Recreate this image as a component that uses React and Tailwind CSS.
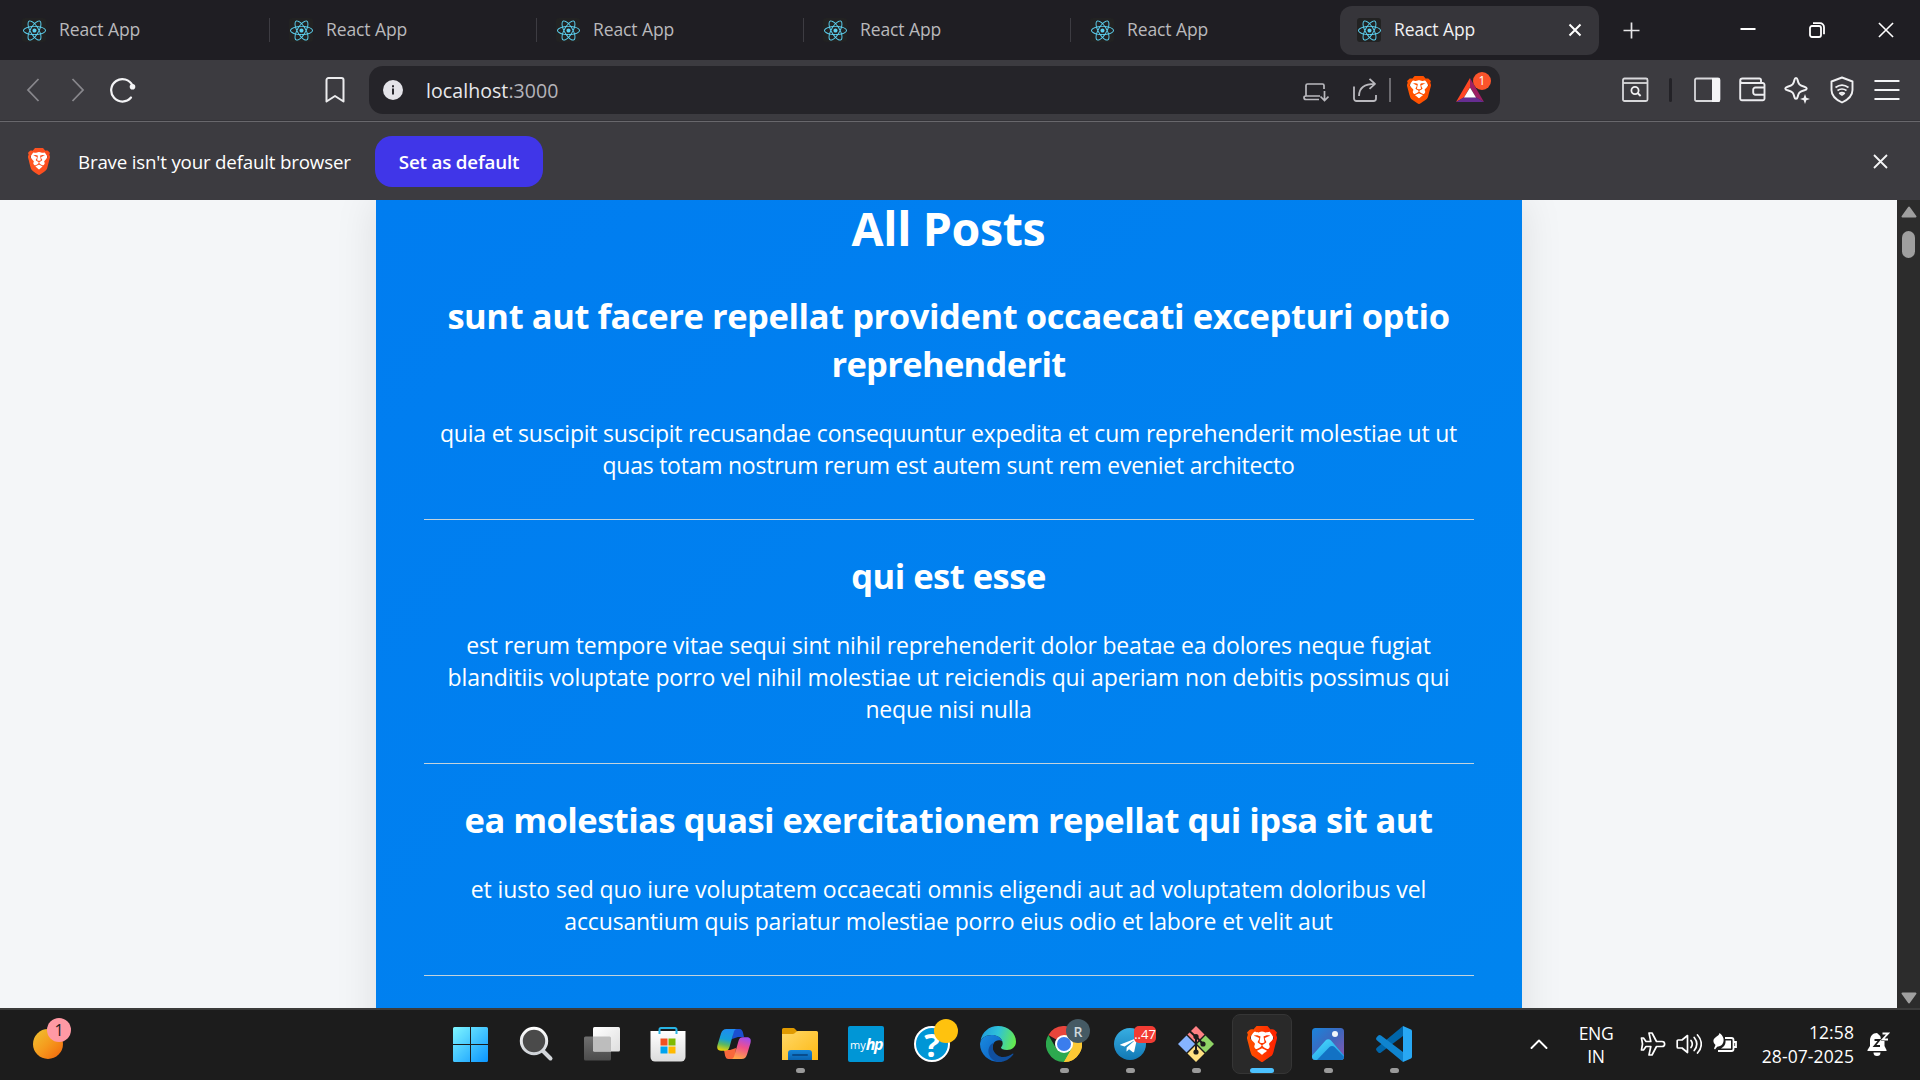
import React from "react";
import { SiBrave } from "react-icons/si";
import { FaReact, FaTelegramPlane } from "react-icons/fa";

const posts = [
  {
    title: [
      ["sunt aut facere repellat provident occaecati excepturi optio", "tracking-[-0.42px]"],
      ["reprehenderit", "tracking-[-0.68px]"],
    ],
    body: [
      ["quia et suscipit suscipit recusandae consequuntur expedita et cum reprehenderit molestiae ut ut", "tracking-[-0.21px]"],
      ["quas totam nostrum rerum est autem sunt rem eveniet architecto", "tracking-[-0.24px]"],
    ],
  },
  {
    title: [["qui est esse", "tracking-[-0.5px]"]],
    body: [
      ["est rerum tempore vitae sequi sint nihil reprehenderit dolor beatae ea dolores neque fugiat", "tracking-[-0.17px]"],
      ["blanditiis voluptate porro vel nihil molestiae ut reiciendis qui aperiam non debitis possimus qui", "tracking-[-0.14px]"],
      ["neque nisi nulla", "tracking-[-0.2px]"],
    ],
  },
  {
    title: [["ea molestias quasi exercitationem repellat qui ipsa sit aut", "tracking-[-0.52px]"]],
    body: [
      ["et iusto sed quo iure voluptatem occaecati omnis eligendi aut ad voluptatem doloribus vel", "tracking-[-0.08px]"],
      ["accusantium quis pariatur molestiae porro eius odio et labore et velit aut", "tracking-[-0.16px]"],
    ],
  },
];

function BraveLogo({ className, id, from = "#ff5722", to = "#fb4a1e" }) {
  return (
    <svg className={className} viewBox="1.9 0 20.2 24" preserveAspectRatio="none">
      <defs>
        <linearGradient id={id} x1="0" x2="1">
          <stop offset="0" stopColor={from} />
          <stop offset="1" stopColor={to} />
        </linearGradient>
      </defs>
      <path d="M5 4L8 2.5h8L19 4l.500 4-2 8-5.500 5-5.500-5-2-8z" fill="#fff" />
      <SiBrave size={24} style={{ fill: "url(#" + id + ")" }} />
    </svg>
  );
}

function Favicon() {
  return (
    <span className="flex h-6 w-6 shrink-0 items-center justify-center rounded-[3px] bg-[#222222]">
      <FaReact className="h-[23px] w-[23px] text-[#5ccfee]" />
    </span>
  );
}

function TabBar() {
  return (
    <div className="flex h-[60px] items-center bg-[#1f1e23] text-[17.5px] leading-6 tracking-[-0.1px]">
      {[0, 1, 2, 3, 4].map((i) => (
        <div key={i} className={"flex h-6 shrink-0 items-center text-[#b9b9bc] " + (i === 0 ? "w-[270px] border-r border-[#3d3c42] pl-[22px]" : i === 4 ? "w-[267px] pl-[19px]" : "w-[267px] border-r border-[#3d3c42] pl-[19px]")}>
          <Favicon />
          <span className="ml-[13px] pb-[2px]">React App</span>
        </div>
      ))}
      <div className="ml-[2px] flex h-[49px] w-[259px] shrink-0 items-center rounded-xl bg-[#36353a] pl-[17px] text-[#f0f0f2]">
        <Favicon />
        <span className="ml-[13px] grow pb-[2px]">React App</span>
        <svg className="mr-[17px] h-[14px] w-[14px]" viewBox="0 0 14 14" fill="none" stroke="#fff" strokeWidth="2"><path d="M1.5 1.5l11 11M12.5 1.5l-11 11" /></svg>
      </div>
      <svg className="ml-[24px] h-[17px] w-[17px]" viewBox="0 0 17 17" fill="none" stroke="#e6e6e8" strokeWidth="1.7"><path d="M8.5 0.5v16M0.5 8.5h16" /></svg>
      <svg className="ml-[100px] h-4 w-4" viewBox="0 0 16 16" stroke="#fff" strokeWidth="2"><path d="M0.500 7h15" /></svg>
      <svg className="ml-[53px] h-4 w-4" viewBox="0 0 16 16" fill="none" stroke="#fff" strokeWidth="1.8"><rect x="1" y="4" width="11" height="11" rx="2" /><path d="M4 1.200h7a4 4 0 0 1 4 4v7" /></svg>
      <svg className="ml-[53px] h-4 w-4" viewBox="0 0 17 17" stroke="#fff" strokeWidth="1.7"><path d="M1 1l15 15M16 1L1 16" /></svg>
    </div>
  );
}

function Toolbar() {
  return (
    <div className="flex h-[60px] items-center bg-[#3c3b40] pl-[26px]">
      <svg className="h-6 w-[14px]" viewBox="0 0 14 24" fill="none" stroke="#88878c" strokeWidth="1.8"><path d="M12.500 1L2 12l10.500 11" /></svg>
      <svg className="ml-[31px] h-6 w-[14px]" viewBox="0 0 14 24" fill="none" stroke="#88878c" strokeWidth="1.8"><path d="M1.500 1L12 12 1.500 23" /></svg>
      <svg className="ml-[24px] h-[26px] w-[28px]" viewBox="0 0 28 26" fill="none" stroke="#f4f4f6" strokeWidth="2.200" strokeLinecap="round"><path d="M23.500 8.500A11.200 11.200 0 1 0 22 20.500" /><circle cx="23.500" cy="9.800" r="2.800" fill="#f4f4f6" stroke="none" /></svg>
      <svg className="ml-[188px] h-[26px] w-5" viewBox="0 0 20 26" fill="none" stroke="#ececee" strokeWidth="2" strokeLinejoin="round"><path d="M3.500 1h13a2 2 0 0 1 2 2v21.500L10 19l-8.500 5.500V3a2 2 0 0 1 2-2z" /></svg>
      <div className="ml-[24px] flex h-12 w-[1131px] shrink-0 items-center rounded-[14px] bg-[#252429] pr-[16px] pl-[14px]">
        <svg className="h-5 w-5" viewBox="0 0 20 20"><circle cx="10" cy="10" r="10" fill="#e4e3e8" /><path d="M9 8.500h2v6H9zM9 5.200h2v2H9z" fill="#2a292e" /></svg>
        <span className="ml-[23px] grow pt-px text-[19.5px] tracking-[0.08px] text-[#e9e9ec]">localhost<span className="text-[#b4b3b9]">:3000</span></span>
        <svg className="mt-1 h-5 w-[26px]" viewBox="0 0 26 20" fill="none" stroke="#bab9be" strokeWidth="1.7"><path d="M16 17.500H3a2 2 0 0 1-2-2c0-1 .8-1.500 2-1.500h14M3 14V3.500A1.500 1.500 0 0 1 4.500 2h15A1.500 1.500 0 0 1 21 3.500V7M21.500 9v9M17.500 14.500l4 4 4-4" /></svg>
        <svg className="ml-[24px] h-6 w-6" viewBox="0 0 24 24" fill="none" stroke="#bab9be" strokeWidth="1.8" strokeLinejoin="round"><path d="M1 8.500V20.500A2.500 2.500 0 0 0 3.500 23h17a2.500 2.500 0 0 0 2.500-2.500V17M6 18C6 10 11 5.800 22 5.800M16.500 .8l5.500 5-5.500 5" /></svg>
        <div className="ml-[12px] h-6 w-[2px] bg-[#6c6b70]" />
        <BraveLogo id="braveShield" className="ml-[16px] h-[28px] w-6" from="#ff5500" to="#ff4d00" />
        <div className="relative ml-[25px] h-6 w-7">
          <svg className="h-6 w-7" viewBox="0 0 28 24"><path d="M14 0L0 24l8-4.500L14 9z" fill="#ff4724" /><path d="M14 0l14 24-8-4.500L14 9z" fill="#9e1f63" /><path d="M0 24h28l-8-4.800H8z" fill="#662d91" /><path d="M14 9.500l6 10H8z" fill="#fff" /></svg>
          <span className="absolute -top-[6px] left-[17px] flex h-[18px] w-[18px] items-center justify-center rounded-full bg-[#fb542b] text-[12px] text-white">1</span>
        </div>
      </div>
      <svg className="ml-[122px] h-[26px] w-[27px]" viewBox="0 0 27 26" fill="none" stroke="#d8d8db" strokeWidth="1.8"><rect x="1" y="1.500" width="24.500" height="22.500" rx="1.500" /><path d="M1 6h24" /><circle cx="13" cy="13.500" r="3.600" stroke="#f0f0f2" /><path d="M15.600 16l3 3" stroke="#f0f0f2" /></svg>
      <div className="ml-[20px] h-6 w-[3px] rounded bg-[#232227]" />
      <svg className="ml-[22px] h-[26px] w-[27px]" viewBox="0 0 27 26"><rect x="1" y="1.500" width="24.500" height="22.500" rx="1.500" fill="none" stroke="#d8d8db" strokeWidth="1.800" /><path d="M18 1h6.500a1.500 1.500 0 0 1 1.500 1.500v21a1.500 1.500 0 0 1-1.500 1.500H18z" fill="#f4f4f6" /></svg>
      <svg className="ml-[18px] h-[26px] w-[27px]" viewBox="0 0 27 26" fill="none" stroke="#ececef" strokeWidth="1.9"><path d="M22 5.500V3a1.500 1.500 0 0 0-1.500-1.500H3.500C2 1.500 1.200 2.500 1.200 3.800S2 6 3.500 6h20A1.800 1.800 0 0 1 25.500 7.800V21.500A1.800 1.800 0 0 1 23.700 23.300H3A1.800 1.800 0 0 1 1.200 21.500V4M25.500 10.500H16.500A2.300 2.300 0 0 0 14.200 12.800V15.500A2.300 2.300 0 0 0 16.500 17.800H25.500" /></svg>
      <svg className="ml-[18px] h-[28px] w-[27px]" viewBox="0 0 27 28" fill="none" stroke="#f0f0f2" strokeWidth="2" strokeLinejoin="round"><path d="M12 2c1 0 1.300.6 1.600 2 .9 4.200 1.600 5.300 6.800 6.700 3.100.9 3.100 2.700 0 3.600-5.200 1.400-5.900 2.500-6.800 6.700-.5 2.400-2.700 2.400-3.200 0-.9-4.200-1.600-5.300-6.800-6.700-3.100-.9-3.100-2.700 0-3.600C8.800 9.300 9.500 8.200 10.400 4c.3-1.400.6-2 1.600-2z" /><path d="M21 18l1.300 3.700L26 23l-3.700 1.300L21 28l-1.300-3.700L16 23l3.700-1.300z" fill="#f0f0f2" stroke="none" /></svg>
      <svg className="ml-[19px] h-[28px] w-6" viewBox="0 0 24 28" fill="none" stroke="#f0f0f2" strokeWidth="1.900" strokeLinejoin="round"><path d="M12 1.500L22.500 5.500V14c0 6-5 10-10.500 12.500C6.500 24 1.500 20 1.500 14V5.500z" /><path d="M5.500 11.500c4-3 9-3 13 0M7.500 14.500c3-2 6-2 9 0M9.700 17.300c1.500-1 3.100-1 4.600 0L12 19z" strokeWidth="1.700" /></svg>
      <svg className="ml-[20px] h-[22px] w-[26px]" viewBox="0 0 26 22" stroke="#f4f4f6" strokeWidth="2" strokeLinecap="round"><path d="M1.200 2h23.500M1.200 11h23.500M1.200 20h23.500" /></svg>
    </div>
  );
}

function DefaultBrowserBar() {
  return (
    <div className="flex h-20 items-center border-t border-[#343338] bg-[#3c3b40]">
      <div className="flex h-full w-full items-center border-t border-[#68676c] pr-[32px] pl-[28px] text-[18.75px]">
        <BraveLogo id="braveInfo" className="h-[27px] w-[22px]" />
        <span className="ml-[28px] w-[297px] pt-[2px] whitespace-nowrap tracking-[-0.2px] text-white">Brave isn't your default browser</span>
        <span className="flex h-[51px] w-[168px] items-center justify-center rounded-[17px] bg-[#4036e8] pt-[2px] font-semibold tracking-[-0.18px] text-white">Set as default</span>
        <svg className="ml-auto h-[15px] w-[15px]" viewBox="0 0 15 15" stroke="#f4f4f6" strokeWidth="1.800"><path d="M1 1l13 13M14 1L1 14" /></svg>
      </div>
    </div>
  );
}

function Page() {
  return (
    <div className="flex h-[808px] overflow-hidden bg-[#f4f6f8]">
      <div className="flex h-full w-[1897px] justify-center overflow-hidden">
        <main className="h-[1000px] w-[1146px] bg-linear-to-br from-[#007df0] to-[#0085ef] px-12 text-center text-white shadow-[0_0_40px_rgba(0,0,0,0.1)]">
          <h1 className="h-[60px] text-[46.5px] leading-[56px] font-bold tracking-[-0.35px]">All Posts</h1>
          {posts.map((post) => (
            <article key={post.title[0][0]} className="border-b border-[#c2d3dd] pt-[32px] pb-[38px]">
              <h2 className="text-[34.5px] leading-[48px] font-bold whitespace-nowrap">
                {post.title.map(([line, tracking]) => <span key={line} className={"block " + tracking}>{line}</span>)}
              </h2>
              <p className="mt-[29px] text-[23px] leading-[32px] whitespace-nowrap">
                {post.body.map(([line, tracking]) => <span key={line} className={"block " + tracking}>{line}</span>)}
              </p>
            </article>
          ))}
        </main>
      </div>
      <div className="flex h-full w-[23px] flex-col items-center bg-[#2c2c2c] pt-[6px] pb-[4px]">
        <svg className="h-3 w-4" viewBox="0 0 16 12"><path d="M8 1.500l6.500 9h-13z" fill="#9f9f9f" stroke="#9f9f9f" strokeWidth="2" strokeLinejoin="round" /></svg>
        <div className="mt-[13px] h-[27px] w-[13px] rounded-full bg-[#9f9f9f]" />
        <svg className="mt-auto h-3 w-4" viewBox="0 0 16 12"><path d="M8 10.500l6.500-9h-13z" fill="#9f9f9f" stroke="#9f9f9f" strokeWidth="2" strokeLinejoin="round" /></svg>
      </div>
    </div>
  );
}

const WindowsIcon = () => (
  <svg className="h-[35px] w-[35px]" viewBox="0 0 35 35">
    <defs><linearGradient id="win" gradientUnits="userSpaceOnUse" x1="0" y1="0" x2="35" y2="35"><stop stopColor="#7ff6ff" /><stop offset="1" stopColor="#0a95ff" /></linearGradient></defs>
    <path fill="url(#win)" d="M1.500 0H17v17H0V1.500A1.500 1.500 0 0 1 1.500 0zM18 0h15.500A1.500 1.500 0 0 1 35 1.500V17H18zM0 18h17v17H1.500A1.500 1.500 0 0 1 0 33.500zM18 18h17v15.500a1.500 1.500 0 0 1-1.500 1.500H18z" />
  </svg>
);

const SearchIcon = () => (
  <svg className="h-9 w-9" viewBox="0 0 36 36">
    <defs><linearGradient id="ring" x1="0" y1="0" x2="0" y2="1"><stop stopColor="#fff" /><stop offset="1" stopColor="#cfd3d8" /></linearGradient></defs>
    <path d="M25.500 25.500l7 7" stroke="#d3d6da" strokeWidth="4" strokeLinecap="round" />
    <circle cx="16" cy="15" r="12.700" fill="#4a4a4a" stroke="url(#ring)" strokeWidth="3" />
  </svg>
);

const TaskViewIcon = () => (
  <svg className="h-9 w-9" viewBox="0 0 36 36">
    <defs>
      <linearGradient id="tv1" x1="0" y1="0" x2="1" y2="1"><stop stopColor="#fff" /><stop offset="1" stopColor="#dedede" /></linearGradient>
      <linearGradient id="tv2" x1="0" y1="0" x2="0" y2="1"><stop stopColor="#6f6f6f" /><stop offset="1" stopColor="#4c4c4c" /></linearGradient>
    </defs>
    <rect x="0" y="10.500" width="27" height="24" rx="1.500" fill="url(#tv2)" />
    <rect x="9" y="1" width="27" height="24.500" rx="1.500" fill="url(#tv1)" />
    <path d="M9 10.500h16.500a1.500 1.500 0 0 1 1.500 1.500v13.500H10.500A1.500 1.500 0 0 1 9 24z" fill="#bdbdbd" />
  </svg>
);

const StoreIcon = () => (
  <svg className="h-9 w-9" viewBox="0 0 36 36">
    <defs><linearGradient id="bag" x1="0" y1="0" x2="0" y2="1"><stop stopColor="#fff" /><stop offset="1" stopColor="#dcdcdc" /></linearGradient></defs>
    <path d="M0.500 5h35v26a4.500 4.500 0 0 1-4.500 4.500H5A4.500 4.500 0 0 1 .5 31z" fill="url(#bag)" />
    <path d="M9.500 8V3.500a1.500 1.500 0 0 1 1.500-1.500h14a1.500 1.500 0 0 1 1.500 1.500V8" fill="none" stroke="#28b4e4" strokeWidth="2" />
    <path d="M10.500 12.500h7v7h-7z" fill="#f25022" /><path d="M18.500 12.500h7v7h-7z" fill="#7fba00" /><path d="M10.500 20.500h7v7h-7z" fill="#00a4ef" /><path d="M18.500 20.500h7v7h-7z" fill="#ffb900" />
  </svg>
);

const CopilotIcon = () => (
  <svg className="h-9 w-9" viewBox="0 0 36 36">
    <defs>
      <linearGradient id="cp1" x1="0.400" y1="0" x2="0.200" y2="1"><stop stopColor="#1f8df0" /><stop offset="0.450" stopColor="#15a0d8" /><stop offset="0.700" stopColor="#5cb860" /><stop offset="1" stopColor="#f5d400" /></linearGradient>
      <linearGradient id="cp2" x1="0.700" y1="0" x2="0.400" y2="1"><stop stopColor="#a04cf0" /><stop offset="0.450" stopColor="#f0508c" /><stop offset="1" stopColor="#ffa548" /></linearGradient>
    </defs>
    <path d="M17 3h6.500c2 0 2.800 1.300 3.400 3.300L28 11h-6l-6 2z" fill="#1b4fd0" />
    <path d="M19 33h-6.500c-2 0-2.800-1.300-3.400-3.300L8 24h6l6-2z" fill="#f8683c" />
    <path d="M10.500 3H21c-2 0-2.800 1.500-3.500 4l-4 14c-.8 2.800-2 3.700-4.500 3.700H5C1.800 24.700.6 22.500 1.500 19L5 7.500C6 4.500 7.500 3 10.500 3z" fill="url(#cp1)" />
    <path d="M25.500 33H15c2 0 2.800-1.500 3.500-4l4-14c.8-2.800 2-3.700 4.500-3.700h4c3.200 0 4.400 2.200 3.500 5.700L31 28.500c-1 3-2.500 4.500-5.500 4.500z" fill="url(#cp2)" />
  </svg>
);

const FolderIcon = () => (
  <svg className="h-9 w-9" viewBox="0 0 36 36">
    <defs>
      <linearGradient id="fd1" x1="0" y1="0" x2="1" y2="1"><stop stopColor="#ffd867" /><stop offset="1" stopColor="#fdb813" /></linearGradient>
      <linearGradient id="fd2" x1="0" y1="0" x2="0" y2="1"><stop stopColor="#1585d8" /><stop offset="1" stopColor="#0a63b0" /></linearGradient>
    </defs>
    <path d="M0 3.500A1.500 1.500 0 0 1 1.500 2h10c1.500 0 2.500 3 4.500 3.500V10H0z" fill="#e09a00" />
    <path d="M0 8h11c2 0 3-3 5-3h18.500A1.500 1.500 0 0 1 36 6.500V34H0z" fill="url(#fd1)" />
    <path d="M6 34v-7a3 3 0 0 1 3-3h18a3 3 0 0 1 3 3v7z" fill="url(#fd2)" />
    <path d="M11 29h14" stroke="#084c8c" strokeWidth="2" strokeLinecap="round" />
  </svg>
);

const HpIcon = () => (
  <span className="flex h-9 w-9 items-center justify-center rounded-[2px] bg-[#0096d6] text-white">
    <span className="text-[11px] leading-none">my</span>
    <span className="-mt-[1px] text-[16px] leading-none font-bold italic tracking-[-1.5px]">hp</span>
  </span>
);

const HelpIcon = () => (
  <span className="relative flex h-9 w-9 items-center justify-center rounded-full border-2 border-white bg-[#0096d6] text-[33px] leading-none font-bold text-white">
    ?
    <span className="absolute -top-[9px] left-[18px] h-6 w-6 rounded-full bg-[#ffc20e]" />
  </span>
);

const EdgeIcon = () => (
  <svg className="h-9 w-9" viewBox="0 0 36 36">
    <defs>
      <linearGradient id="eg1" x1="0" y1="0.400" x2="1" y2="0.600"><stop stopColor="#1f9ddf" /><stop offset="0.450" stopColor="#2fc2d8" /><stop offset="1" stopColor="#66eb4a" /></linearGradient>
      <linearGradient id="eg2" x1="0" y1="0" x2="1" y2="1"><stop stopColor="#1a8be0" /><stop offset="1" stopColor="#0a5cc0" /></linearGradient>
    </defs>
    <path d="M0.500 15C2 6 9 0 18 0c10.500 0 18 7.500 18 15.500C36 21 32 24 27 24c-3.500 0-6-1-6-2.200 0-1 1.700-1.800 1.700-4.300C22.700 13 18 9 11.500 9 6 9 2 12 .5 15z" fill="url(#eg1)" />
    <path d="M0 18C.5 12 6 9 11.500 9c5.500 0 10 2.700 11 6.500-2-2-7-2-9 2-3 6 2 15 9 18C12 38 0 30 0 18z" fill="url(#eg2)" />
    <path d="M14 16.500c-4 6 2 14.500 9 14.500 4 0 7-1.500 9.500-3.300.6-.4 1.200.2.800.8C30 33 25 36 19 36c-7-.5-11.500-7-10.500-12.500.6-3.500 3-6 5.500-7z" fill="#104f9e" />
  </svg>
);

const ChromeIcon = () => (
  <span className="relative h-9 w-9">
    <svg className="h-9 w-9" viewBox="0 0 36 36">
      <path d="M18 18L2.400 9A18 18 0 0 1 33.600 9z" fill="#e8453c" />
      <path d="M18 18L33.600 9A18 18 0 0 1 18 36z" fill="#fcc934" />
      <path d="M2.400 9A18 18 0 0 0 18 36l7.800-13.500L10.200 22.500z" fill="#2da94f" />
      <path d="M18 9h15.600A18 18 0 0 1 18 36l7.800-13.500z" fill="#fcc934" />
      <circle cx="18" cy="18" r="9" fill="#fff" /><circle cx="18" cy="18" r="7" fill="#3b7ded" />
    </svg>
    <span className="absolute -top-[7px] left-5 flex h-6 w-6 items-center justify-center rounded-full bg-[#455a64] text-[14px] font-semibold text-[#cfd8dc]">R</span>
  </span>
);

const TelegramIcon = () => (
  <span className="relative flex h-8 w-8 items-center justify-center rounded-full bg-linear-to-b from-[#37aee2] to-[#1179b5]">
    <FaTelegramPlane className="mt-[2px] -ml-[3px] h-[19px] w-[19px] text-white" />
    <span className="absolute -top-[2px] left-5 flex h-[17px] w-[22px] items-center justify-center rounded-[5px] bg-[#f23c34] text-[13px] text-white">..47</span>
  </span>
);

const GitIcon = () => (
  <svg className="h-9 w-9" viewBox="0 0 36 36">
    <path d="M18 0l8.500 8.500L18 17 9.500 8.500z" fill="#ff8083" /><path d="M27.500 9.500L36 18l-8.500 8.500L19 18z" fill="#8fd366" /><path d="M18 19l8.500 8.500L18 36l-8.500-8.500z" fill="#ffe082" /><path d="M8.500 9.500L17 18l-8.500 8.500L0 18z" fill="#86b4ff" />
    <path d="M11.500 5l6.500 6v14.500M18 10.500l6.500 7" stroke="#1c1c1c" strokeWidth="2" fill="none" />
    <circle cx="18" cy="10.500" r="2.600" fill="#1c1c1c" /><circle cx="25" cy="18" r="2.600" fill="#1c1c1c" /><circle cx="18" cy="26" r="2.600" fill="#1c1c1c" />
  </svg>
);

const PhotosIcon = () => (
  <svg className="h-8 w-8" viewBox="0 0 32 32">
    <defs>
      <linearGradient id="ph1" x1="0" y1="0" x2="1" y2="1"><stop stopColor="#1a85dc" /><stop offset="0.500" stopColor="#3f66bc" /><stop offset="1" stopColor="#8a55b0" /></linearGradient>
      <linearGradient id="ph2" x1="0" y1="0" x2="1" y2="1"><stop stopColor="#4fe0ff" /><stop offset="1" stopColor="#1590e0" /></linearGradient>
      <clipPath id="phc"><rect width="32" height="32" rx="3.500" /></clipPath>
    </defs>
    <g clipPath="url(#phc)">
      <rect width="32" height="32" fill="url(#ph1)" />
      <path d="M-2 30L13.500 12.500c1.500-1.700 4-1.700 5.500 0L36 32H0z" fill="url(#ph2)" />
      <path d="M4 33L17.500 19c1.500-1.500 3.500-1.500 5 0L34 31v2z" fill="#1372c4" />
      <circle cx="23" cy="6" r="3" fill="#f2f6fa" />
    </g>
  </svg>
);

const CodeIcon = () => (
  <svg className="h-9 w-9" viewBox="0 0 36 36">
    <path d="M27 0v10L5 26.500c-1 .8-2 .6-2.700 0l-1.600-1.800c-.9-1-.8-2 .1-2.900z" fill="#0065a9" />
    <path d="M27 36V26L5 9.500c-1-.8-2-.6-2.700 0L.7 11.300c-.9 1-.8 2 .1 2.900z" fill="#0f84cf" />
    <path d="M27 0l8 3.500c.7.300 1 1 1 1.700v25.600c0 .8-.3 1.400-1 1.700L27 36z" fill="#28a8f4" />
  </svg>
);

const dock = [
  [WindowsIcon], [SearchIcon], [TaskViewIcon], [StoreIcon], [CopilotIcon], [FolderIcon, "open"], [HpIcon], [HelpIcon],
  [EdgeIcon], [ChromeIcon, "open"], [TelegramIcon, "open"], [GitIcon, "open"], [null, "active"], [PhotosIcon, "open"], [CodeIcon, "open"],
];

function Taskbar() {
  return (
    <div className="flex h-[72px] border-t-2 border-[#3b3b3b] bg-[#1c1c1c] text-white">
      <div className="relative mt-[19px] ml-[33px] h-[30px] w-[30px] shrink-0 rounded-full bg-linear-to-br from-[#edc331] via-[#f59a1d] to-[#f0600a]">
        <span className="absolute -top-[11px] left-[14px] flex h-6 w-6 items-center justify-center rounded-full bg-[#ff99a4] text-[16px] text-[#1c1c1c]">1</span>
      </div>
      <div className="ml-[374px] flex">
        {dock.map(([Icon, state], i) => (
          <div key={i} className="flex w-[66px] flex-col items-center pt-1">
            <div className={"flex h-[60px] w-[60px] flex-col items-center rounded-lg border pt-[11px] " + (state === "active" ? "border-[#353535] bg-[#292929]" : "border-transparent")}>
              <div className="flex h-9 w-9 items-center justify-center">
                {Icon ? <Icon /> : <BraveLogo id="braveDock" className="h-9 w-[30px]" from="#ff5500" to="#ff2000" />}
              </div>
              {state === "open" && <div className="mt-[6px] h-[5px] w-[9px] rounded-full bg-[#9a9a9a]" />}
              {state === "active" && <div className="mt-[6px] h-[5px] w-6 rounded-full bg-[#4cc2ff]" />}
            </div>
          </div>
        ))}
      </div>
      <div className="ml-[103px] flex h-[68px] items-center text-[17.5px]">
        <svg className="h-[10px] w-[18px]" viewBox="0 0 18 10" fill="none" stroke="#fff" strokeWidth="1.900" strokeLinecap="round" strokeLinejoin="round"><path d="M1.500 9L9 1.500 16.500 9" /></svg>
        <div className="ml-[30px] flex w-[36px] flex-col items-center pt-px leading-[23px] tracking-[-0.3px]"><span>ENG</span><span>IN</span></div>
        <svg className="ml-[26px] h-6 w-[26px]" viewBox="0 0 26 24" fill="none" stroke="#fff" strokeWidth="1.700" strokeLinejoin="round"><path d="M9 1h3l4.500 8.500H22c3.500 0 3.500 5 0 5h-5.500L12 23H9l1.800-8.500H6L3.500 18H1.500L2.500 12 1.500 6h2L6 9.500h4.800z" /></svg>
        <svg className="ml-[10px] h-[22px] w-[26px]" viewBox="0 0 26 22" fill="none" stroke="#fff" strokeWidth="1.700" strokeLinecap="round" strokeLinejoin="round"><path d="M1.200 8v6a1 1 0 0 0 1 1H6l5.500 4.500V2.500L6 7H2.200a1 1 0 0 0-1 1zM15 7.500c1.500 2 1.500 5 0 7M18.200 4.500c3.200 4 3.200 9 0 13M21.500 2c5 5.500 5 12.500 0 18" /></svg>
        <svg className="ml-[10px] -mt-[3px] h-[22px] w-[26px]" viewBox="0 0 26 22" fill="none" stroke="#fff" strokeWidth="1.800"><path d="M13 6h6.500A2 2 0 0 1 21.500 8v9a2 2 0 0 1-2 2H6M22 10h2v5h-2" /><path d="M7.500 1c3.500 2.500 5 6 3.700 9.500-.8 2.500-3 4-6 4.200L3 17.500 2 16.500 3.500 13C0 9.500 1.500 6.500 4 5c2-1.200 3.200-2.200 3.500-4z" fill="#fff" stroke="none" /><path d="M13.500 8.500h5.500v8H9c3-1.500 5-4.500 4.500-8z" fill="#fff" stroke="none" /></svg>
        <div className="ml-[19px] flex w-[97px] flex-col items-end pb-px leading-[24px] tracking-[0.1px]"><span>12:58</span><span>28-07-2025</span></div>
        <svg className="ml-[13px] h-6 w-[23px]" viewBox="0 0 23 24"><path d="M10 1C5.500 1 3 4.500 3 8.500V14L.500 18v1h19v-1L17.500 14V8z" fill="#fff" /><path d="M6.500 20.500h7a3.500 3.500 0 0 1-7 0z" fill="#fff" /><path d="M7.500 8h5L7.500 14h5.500" fill="none" stroke="#1c1c1c" strokeWidth="1.800" /><path d="M13 0h10v9H14z" fill="#1c1c1c" /><path d="M15.500 1.500H21L15.500 7.500H21" fill="none" stroke="#fff" strokeWidth="1.800" /></svg>
      </div>
    </div>
  );
}

export default function App() {
  return (
    <div className="h-[1080px] w-[1920px] overflow-hidden font-['Open_Sans','Noto_Sans',sans-serif]">
      <TabBar />
      <Toolbar />
      <DefaultBrowserBar />
      <Page />
      <Taskbar />
    </div>
  );
}
